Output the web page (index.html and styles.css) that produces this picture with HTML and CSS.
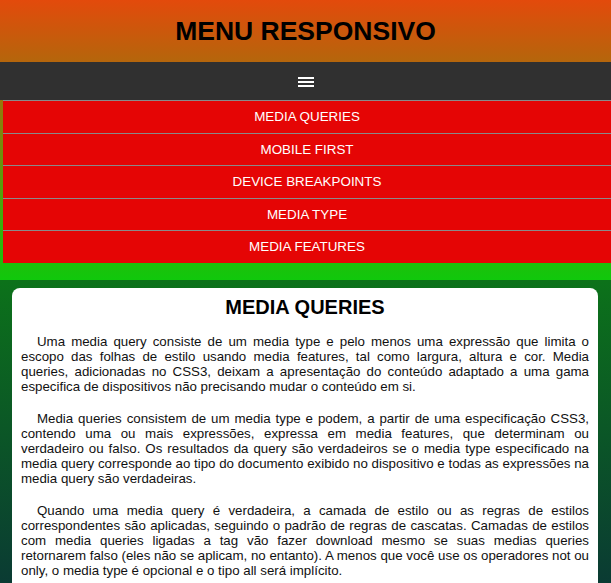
FILE: index.html
```html
<!DOCTYPE html>
<html lang="pt-BR">
<head>
<meta charset="utf-8">
<title>Menu Responsivo</title>
<link rel="stylesheet" href="styles.css">
</head>
<body>
<div class="top">
  <header class="header"><h1 class="title">MENU RESPONSIVO</h1></header>
  <nav class="navbar">
    <svg class="burger" width="16" height="10" viewBox="0 0 16 10"><rect x="0" y="0" width="16" height="2" fill="#fff"/><rect x="0" y="4" width="16" height="2" fill="#fff"/><rect x="0" y="8" width="16" height="2" fill="#fff"/></svg>
  </nav>
  <ul class="menu">
    <li class="menu-item">MEDIA QUERIES</li>
    <li class="menu-item">MOBILE FIRST</li>
    <li class="menu-item">DEVICE BREAKPOINTS</li>
    <li class="menu-item">MEDIA TYPE</li>
    <li class="menu-item">MEDIA FEATURES</li>
  </ul>
  <div class="band"></div>
</div>
<main class="main">
  <article class="card">
    <h2 class="card-title">MEDIA QUERIES</h2>
    <p class="text">Uma media query consiste de um media type e pelo menos uma expressão que limita o escopo das folhas de estilo usando media features, tal como largura, altura e cor. Media queries, adicionadas no CSS3, deixam a apresentação do conteúdo adaptado a uma gama especifica de dispositivos não precisando mudar o conteúdo em si.</p>
    <p class="text">Media queries consistem de um media type e podem, a partir de uma especificação CSS3, contendo uma ou mais expressões, expressa em media features, que determinam ou verdadeiro ou falso. Os resultados da query são verdadeiros se o media type especificado na media query corresponde ao tipo do documento exibido no dispositivo e todas as expressões na media query são verdadeiras.</p>
    <p class="text">Quando uma media query é verdadeira, a camada de estilo ou as regras de estilos correspondentes são aplicadas, seguindo o padrão de regras de cascatas. Camadas de estilos com media queries ligadas a tag vão fazer download mesmo se suas medias queries retornarem falso (eles não se aplicam, no entanto). A menos que você use os operadores not ou only, o media type é opcional e o tipo all será implícito.</p>
  </article>
</main>
</body>
</html>
```
FILE: styles.css
```css
* { box-sizing: border-box; }
html, body { margin: 0; padding: 0; }
body {
  font-family: "Liberation Sans", Arial, sans-serif;
  background: #0a3b33;
}
.top {
  background: linear-gradient(#e34a0c, #10c80c);
}
.header {
  height: 62px;
  display: flex;
  align-items: center;
  justify-content: center;
}
.title {
  margin: 0;
  font-size: 26.5px;
  font-weight: bold;
  color: #000;
  line-height: 1;
  padding-top: 1px;
}
.navbar {
  height: 38px;
  background: #303030;
  display: flex;
  align-items: center;
  justify-content: center;
}
.burger { display: block; margin-top: 2px; }
.menu {
  list-style: none;
  margin: 0;
  padding: 0 0 0 3px;
}
.menu-item {
  background: #e50505;
  border-top: 1px solid #8a8a8a;
  color: #fff;
  text-align: center;
  font-size: 13.4px;
  height: 32.6px;
  line-height: 31.6px;
}
.band { height: 17px; }
.main {
  background: linear-gradient(#0c721a 0, #0a3b33 303px);
  padding: 8px 13px 20px 12px;
}
.card {
  background: #fff;
  border-radius: 8px;
  padding: 7px 9px 10px;
}
.card-title {
  margin: 0 0 15px;
  text-align: center;
  font-size: 20px;
  line-height: 24px;
  font-weight: bold;
  color: #000;
}
.text {
  margin: 0 0 17px;
  font-size: 13.3px;
  line-height: 15px;
  text-align: justify;
  text-indent: 16px;
  color: #111;
}
```
